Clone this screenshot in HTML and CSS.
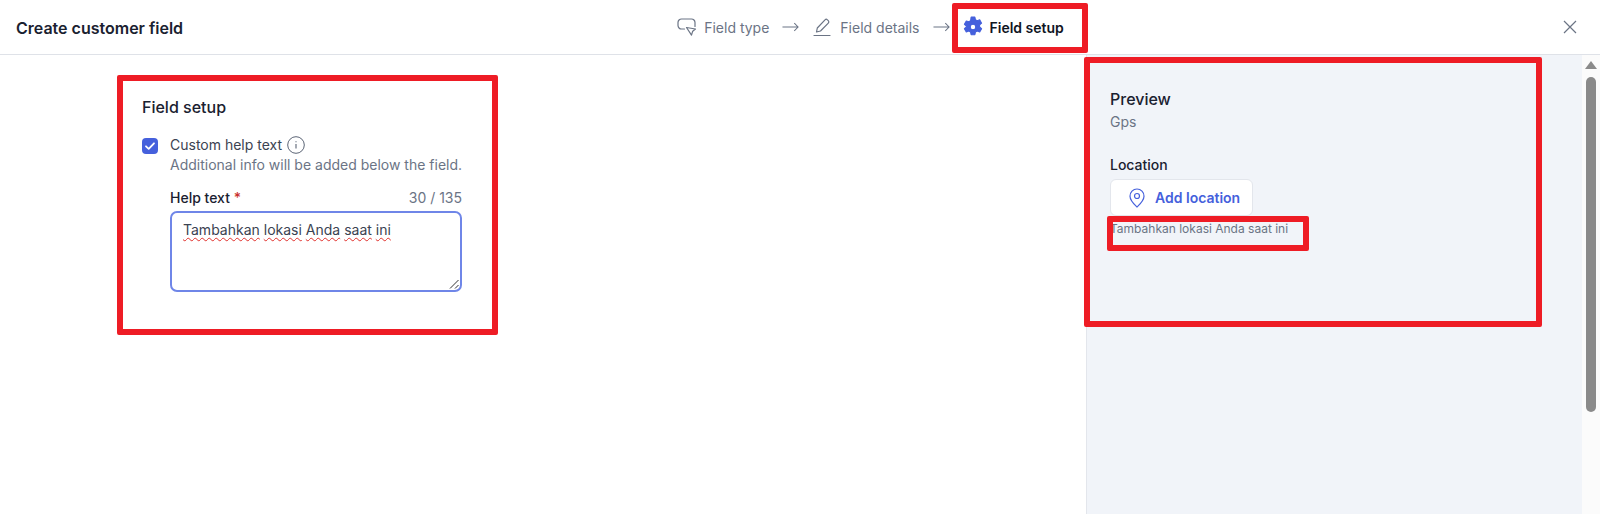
FILE: index.html
```html
<!DOCTYPE html>
<html lang="en">
<head>
<meta charset="utf-8">
<title>Create customer field</title>
<link rel="stylesheet" href="styles.css">
</head>
<body>
<div class="app">
  <header class="topbar">
    <h1 class="title">Create customer field</h1>
    <nav class="steps">
      <span class="step">
        <svg class="step-icon" viewBox="0 0 20 20" fill="none" stroke="#6b7485" stroke-width="1.2" stroke-linejoin="round" stroke-linecap="round"><path d="M7.500 12H4.500A3.500 3.500 0 0 1 1 8.500V5.500A3.500 3.500 0 0 1 4.500 2h10A3.500 3.500 0 0 1 18 5.500v4"/><path d="M9.500 10.500l9 1.500-2.800 2.200-1.200 4z"/></svg>
        Field type
      </span>
      <svg class="arrow" viewBox="0 0 18 10" fill="none" stroke="#6b7485" stroke-width="1.100"><path d="M0.500 5H17M13 1l4 4-4 4"/></svg>
      <span class="step">
        <svg class="step-icon" viewBox="0 0 20 20" fill="none" stroke="#6b7485" stroke-width="1.200" stroke-linejoin="round" stroke-linecap="round"><path d="M4.500 15l.8-4L13 2.800a1.700 1.700 0 0 1 2.400 0l.9.9a1.700 1.700 0 0 1 0 2.400L8.500 14z"/><path d="M2 18.500h16"/></svg>
        <span class="step-text">Field details</span>
      </span>
      <svg class="arrow" viewBox="0 0 18 10" fill="none" stroke="#6b7485" stroke-width="1.100"><path d="M0.500 5H17M13 1l4 4-4 4"/></svg>
      <span class="step step-active">
        <svg class="gear-icon" viewBox="0 0 20 20"><path fill="#4560dc" stroke="#4560dc" stroke-width="1" stroke-linejoin="round" fill-rule="evenodd" d="M8.300 1h3.400l.5 2.400 1.600.9 2.300-.8 1.700 3-1.800 1.600v1.800l1.800 1.600-1.700 3-2.300-.8-1.600.9-.5 2.400H8.300l-.5-2.400-1.600-.9-2.300.8-1.700-3 1.800-1.600V9.100L2.200 7.500l1.700-3 2.300.8 1.600-.9zM10 7.500a2.500 2.500 0 1 0 0 5 2.500 2.500 0 0 0 0-5z"/></svg>
        Field setup
      </span>
    </nav>
    <svg class="close" viewBox="0 0 16 16" fill="none" stroke="#6b7485" stroke-width="1.200"><path d="M2 2l12 12M14 2L2 14"/></svg>
  </header>

  <div class="body">
    <main class="main">
      <section class="card">
        <h2 class="card-title">Field setup</h2>
        <div class="check-row">
          <span class="checkbox">
            <svg viewBox="0 0 16 16" fill="none" stroke="#fff" stroke-width="1.800" stroke-linecap="round" stroke-linejoin="round"><path d="M4 8.300l2.700 2.500L12 5.300"/></svg>
          </span>
          <div class="check-text">
            <div class="check-label">Custom help text
              <svg class="info" viewBox="0 0 18 18" fill="none" stroke="#5b6475"><circle cx="9" cy="9" r="8.300" stroke-width="1"/><path d="M9 8v4.500M9 5.200v1" stroke-width="1.100"/></svg>
            </div>
            <div class="check-hint">Additional info will be added below the field.</div>
          </div>
        </div>
        <div class="field">
          <div class="field-head">
            <span class="field-label">Help text <span class="req">*</span></span>
            <span class="counter">30 / 135</span>
          </div>
          <div class="textarea">
            <span class="typed"><span class="sp">Tambahkan</span> <span class="sp">lokasi</span> <span class="sp">Anda</span> <span class="sp">saat</span> <span class="sp">ini</span></span>
            <svg class="grip" viewBox="0 0 10 10" fill="none" stroke="#333" stroke-width="1"><path d="M1 9.500L9.500 1M6 9.500L9.500 6"/></svg>
          </div>
        </div>
      </section>
    </main>

    <aside class="preview">
      <h2 class="preview-title">Preview</h2>
      <div class="preview-sub">Gps</div>
      <div class="preview-label">Location</div>
      <button class="loc-btn" type="button">
        <svg class="pin" viewBox="0 0 16 20" fill="none" stroke="#4560dc" stroke-width="1.200"><path d="M8 1a7 7 0 0 1 7 7.200c0 4.300-4.300 8.200-7 10.800-2.700-2.600-7-6.500-7-10.800A7 7 0 0 1 8 1z"/><circle cx="8" cy="8" r="2.500"/></svg>
        Add location
      </button>
      <div class="preview-help">Tambahkan lokasi Anda saat ini</div>
    </aside>

    <div class="scrollbar">
      <span class="scroll-up"></span>
      <span class="scroll-thumb"></span>
    </div>
  </div>

  <span class="mark mark-step"></span>
  <span class="mark mark-card"></span>
  <span class="mark mark-preview"></span>
  <span class="mark mark-help"></span>
</div>
</body>
</html>
```

FILE: styles.css
```css
* { box-sizing: border-box; }
html, body { margin: 0; height: 100%; overflow: hidden; }
body { font-family: Inter, "Liberation Sans", sans-serif; color: #1a2130; background: #fff; }

.app { position: relative; width: 1600px; height: 514px; display: flex; flex-direction: column; }

.topbar { position: relative; height: 55px; flex: none; display: flex; align-items: center; justify-content: center; border-bottom: 1px solid #dfe2e8; }
.title { position: absolute; left: 16px; top: 18px; margin: 0; font-size: 16px; line-height: 20px; font-weight: 600; color: #1a2130; }
.steps { display: flex; align-items: center; margin-left: 141px; }
.step { display: flex; align-items: center; gap: 7px; font-size: 14px; font-weight: 400; color: #6b7485; white-space: nowrap; }
.step-text { margin-left: 1px; }
.step-active { color: #10151f; font-weight: 600; gap: 6px; margin-left: -1px; }
.step-icon { width: 20px; height: 20px; flex: none; }
.gear-icon { width: 22px; height: 22px; flex: none; }
.arrow { width: 17px; height: 10px; margin: 0 13px; flex: none; }
.close { position: absolute; right: 22px; top: 19px; width: 16px; height: 16px; }

.body { flex: 1; display: flex; min-height: 0; }
.main { flex: 1; padding: 41px 0 0 142px; }
.card { width: 320px; }
.card-title { margin: 0; font-size: 16px; line-height: 23px; font-weight: 500; color: #1a2130; }

.check-row { display: flex; gap: 12px; margin-top: 16px; }
.checkbox { width: 16px; height: 16px; margin-top: 3px; border-radius: 4px; background: #4560dc; flex: none; display: flex; }
.checkbox svg { width: 16px; height: 16px; }
.check-label { display: flex; align-items: center; gap: 5px; font-size: 14px; line-height: 20px; color: #3b4352; }
.info { width: 18px; height: 18px; }
.check-hint { font-size: 14px; line-height: 20px; color: #6b7485; white-space: nowrap; }

.field { margin: 12px 0 0 28px; width: 292px; }
.field-head { display: flex; justify-content: space-between; align-items: flex-end; height: 20px; }
.field-label { font-size: 14px; font-weight: 500; line-height: 18px; color: #1a2130; }
.req { color: #c9302c; }
.counter { font-size: 14px; line-height: 18px; color: #6b7485; }
.textarea { position: relative; height: 81px; margin-top: 4px; padding: 7px 11px; border: 2px solid #6f86e8; border-radius: 7px; font-size: 14px; line-height: 20px; color: #3b4352; }
.sp { text-decoration: underline wavy #e0302c 1px; text-underline-offset: 2px; }
.grip { position: absolute; right: 1px; bottom: 1px; width: 10px; height: 10px; }

.preview { width: 496px; flex: none; padding: 34px 24px 0 23px; background: #f1f4f9; border-left: 1px solid #e3e6ec; }
.preview-title { margin: 0; font-size: 16px; line-height: 20px; font-weight: 500; color: #1a2130; }
.preview-sub { margin-top: 3px; font-size: 14px; line-height: 20px; color: #6b7485; }
.preview-label { margin-top: 23px; font-size: 14px; line-height: 20px; font-weight: 500; color: #1a2130; }
.loc-btn { display: flex; align-items: center; gap: 10px; width: 143px; height: 37px; margin-top: 4px; padding: 0 0 0 18px; background: #fff; border: 1px solid #e3e6ec; border-radius: 6px; font: 600 14px Inter, "Liberation Sans", sans-serif; color: #4560dc; }
.pin { width: 16px; height: 20px; flex: none; }
.preview-help { margin-top: 5px; font-size: 12px; line-height: 16px; color: #6b7485; }

.scrollbar { width: 18px; flex: none; background: #fbfbfb; display: flex; flex-direction: column; align-items: center; padding-top: 6px; }
.scroll-up { width: 0; height: 0; border-left: 6px solid transparent; border-right: 6px solid transparent; border-bottom: 8px solid #8a8a8a; }
.scroll-thumb { width: 10px; height: 335px; margin-top: 8px; background: #8a8a8a; border-radius: 5px; }

.mark { position: absolute; border: 6px solid #ee1c25; border-radius: 2px; pointer-events: none; }
.mark-step { left: 952px; top: 3px; width: 136px; height: 50px; }
.mark-card { left: 117px; top: 75px; width: 381px; height: 260px; }
.mark-preview { left: 1084px; top: 57px; width: 458px; height: 270px; }
.mark-help { left: 1107px; top: 216px; width: 202px; height: 35px; }
```
